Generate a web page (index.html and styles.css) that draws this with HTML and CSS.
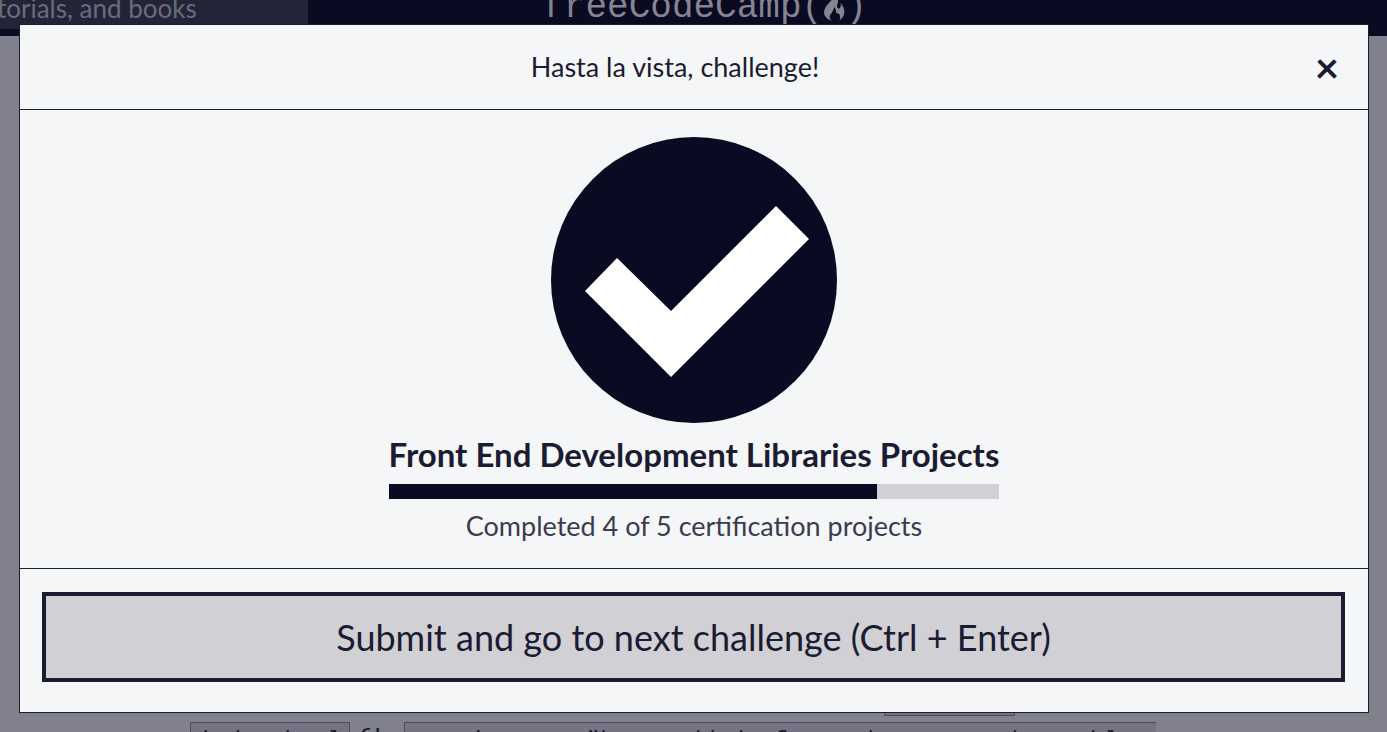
FILE: index.html
```html
<!DOCTYPE html>
<html lang="en">
<head>
<meta charset="utf-8">
<meta name="viewport" content="width=device-width, initial-scale=1">
<title>freeCodeCamp challenge</title>
<link rel="stylesheet" href="styles.css">
</head>
<body>
<div class="page">
  <header class="navbar">
    <input class="search" type="text" aria-label="Search" value="torials, and books">
    <a class="brand" href="#"><span>freeCodeCamp(</span><svg class="flame" viewBox="0 0 20 28" aria-hidden="true"><path d="M10 -2C13 4 15 7 13 11C12 14 15 16 16 13C17 12 16 10 16 9C21 15 21 21 15 26C17 22 15 19 13 19C11 19 13 16 10 13C10 17 6 20 6 22C6 24 7 25 8 26C0 23-1 18 3 12C7 7 11 5 10 -2Z"/></svg><span>)</span></a>
  </header>
  <main class="lesson">
    <div class="upper"></div>
    <p class="line"><code>index.html</code><span>file</span><code class="open">&lt;script src="https://cdn.freecodecamp.org/testable-</code></p>
  </main>
</div>
<div class="backdrop">
  <section class="dialog" role="dialog" aria-modal="true" aria-labelledby="dialog-title">
    <header class="dialog-header">
      <h2 class="dialog-title" id="dialog-title">Hasta la vista, challenge!</h2>
      <button class="close" type="button" aria-label="Close">×</button>
    </header>
    <div class="dialog-body">
      <svg class="check" viewBox="0 0 286 286" role="img" aria-label="Passed"><circle cx="143" cy="143" r="143" fill="#0a0a23"/><path d="M66 121L120 174L225 69L258 102L120 240L34 154Z" fill="#fff"/></svg>
      <div class="progress">
        <h3 class="block-title">Front End Development Libraries Projects</h3>
        <div class="track" role="progressbar" aria-label="Certification progress" aria-valuemin="0" aria-valuemax="100" aria-valuenow="80"><div class="fill" style="width: 80%"></div></div>
        <p class="status">Completed 4 of 5 certification projects</p>
      </div>
    </div>
    <footer class="dialog-footer">
      <button class="submit" type="button">Submit and go to next challenge (Ctrl + Enter)</button>
    </footer>
  </section>
</div>
</body>
</html>
```

FILE: styles.css
```css
* {
  box-sizing: border-box;
}

body {
  margin: 0;
  font-family: Lato, sans-serif;
  color: #1b1b32;
  background: #80818d;
}

.page {
  display: flex;
  flex-direction: column;
  justify-content: space-between;
  height: 100vh;
  overflow: hidden;
}

.navbar {
  display: grid;
  grid-template-columns: 1fr auto 1fr;
  align-items: start;
  height: 36px;
  background: #0a0a23;
}

.search {
  width: 308px;
  height: 29px;
  padding: 0 0 13px;
  border: 0;
  font: 26px/32px Lato, sans-serif;
  text-indent: -3px;
  color: #6b6b79;
  background: #242438;
}

.brand {
  display: flex;
  align-items: center;
  height: 16px;
  padding-left: 22px;
  font: 36px/40px "Liberation Mono", monospace;
  color: #858591;
  text-decoration: none;
}

.flame {
  width: 22px;
  height: 30px;
  fill: currentColor;
  overflow: visible;
}

.lesson {
  height: 28px;
  padding-left: 190px;
  white-space: nowrap;
}

.upper {
  width: 131px;
  height: 12px;
  margin: 0 0 6px 694px;
  border: 1px solid #4b4b5e;
  background: #757382;
}

.line {
  display: flex;
  gap: 9px;
  margin: 0;
  font-size: 27px;
  line-height: 32px;
}

.line code {
  padding: 0 7px;
  border: 1px solid #4b4b5e;
  font: 24px/38px "Liberation Mono", monospace;
  background: #757382;
}

.line .open {
  padding: 0 8px;
  border-right: 0;
}

.backdrop {
  position: fixed;
  inset: 0;
  padding: 24px 18px 19px 19px;
}

.dialog {
  display: flex;
  flex-direction: column;
  border: 1px solid #1b1b32;
  background: #f5f6f7;
}

.dialog-header {
  display: flex;
  align-items: center;
  padding: 22px;
  border-bottom: 1px solid #1b1b32;
}

.dialog-title {
  flex: 1;
  margin: 0;
  font-size: 27px;
  font-weight: 400;
  line-height: 40px;
  text-align: center;
}

.close {
  width: 38px;
  height: 40px;
  padding: 0;
  border: 0;
  font: 700 42px/40px Lato, sans-serif;
  color: #1b1b32;
  background: transparent;
}

.dialog-body {
  display: flex;
  flex-direction: column;
  align-items: center;
  padding: 27px 22px 22px;
  border-bottom: 1px solid #1b1b32;
}

.check {
  width: 286px;
  height: 286px;
}

.progress {
  padding-top: 9px;
  text-align: center;
}

.block-title {
  margin: 0;
  font-size: 33px;
  font-weight: 700;
  line-height: 44px;
}

.track {
  height: 15px;
  margin-top: 8px;
  background: #d0d0d5;
}

.fill {
  height: 100%;
  background: #0a0a23;
}

.status {
  margin: 7px 0 0;
  font-size: 27px;
  line-height: 40px;
  color: #3b3b4f;
}

.dialog-footer {
  padding: 23px 23px 30px 22px;
}

.submit {
  display: block;
  width: 100%;
  height: 90px;
  padding: 0;
  border: 4px solid #1b1b32;
  font: 36px/54px Lato, sans-serif;
  color: #1b1b32;
  background: #d0d0d5;
}
```
